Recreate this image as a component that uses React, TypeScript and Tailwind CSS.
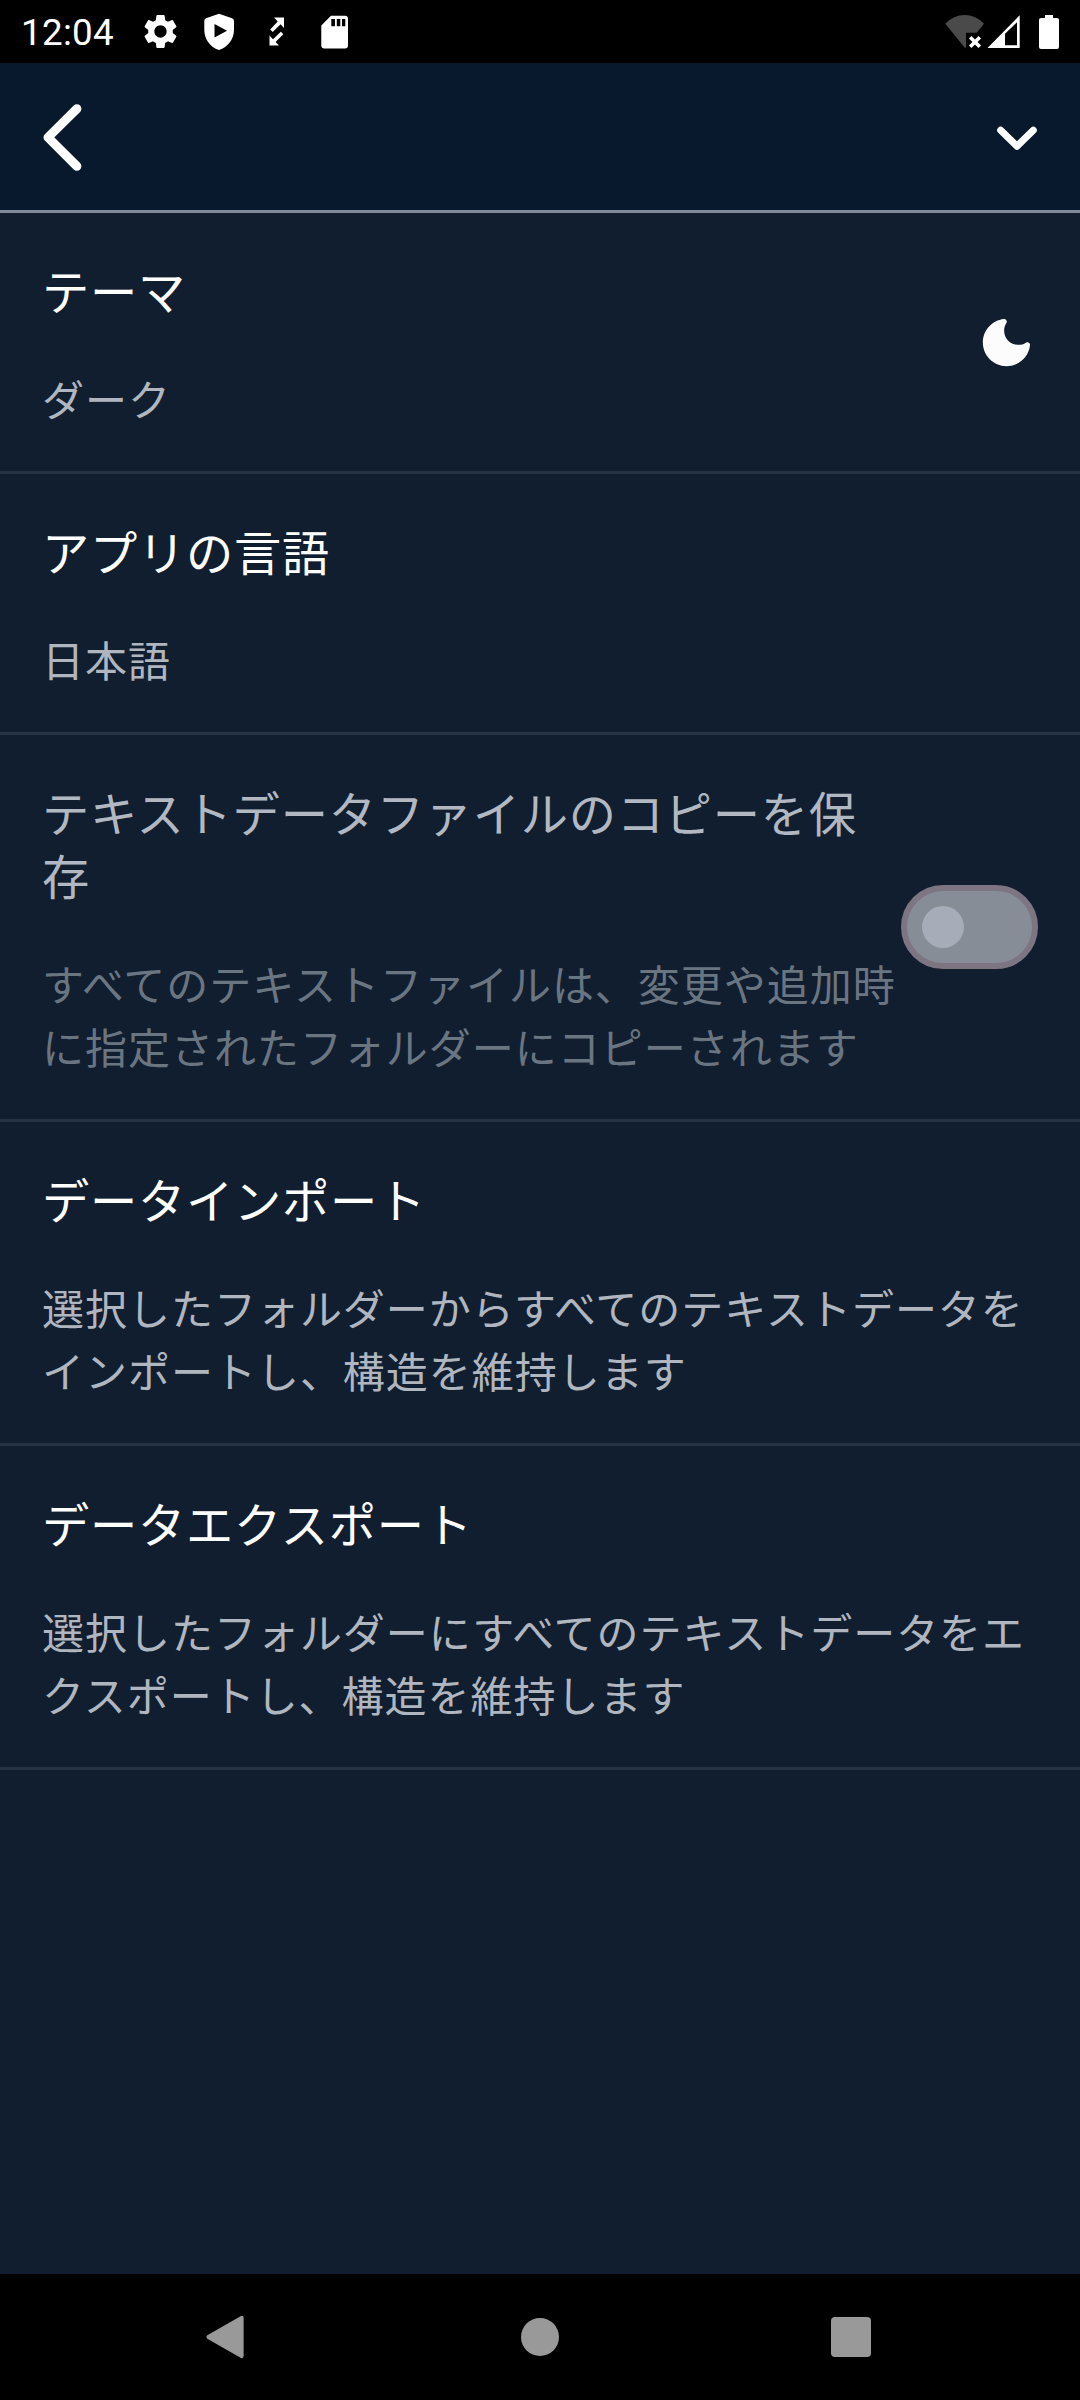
import type { ReactNode } from 'react';
import { MdSettings } from 'react-icons/md';

type SettingRowProps = {
    title: string;
    subtitle: string;
    disabled?: boolean;
    action?: ReactNode;
};

const StatusBar = () => (
    <div className="flex h-[63px] shrink-0 items-center justify-between bg-black pl-[21px] pr-[21px] text-white">
        <div className="flex items-center">
            <span className="w-[119px] pt-[3px] font-[Roboto,sans-serif] text-[36.75px] leading-none tracking-[0.3px]">
                12:04
            </span>
            <MdSettings className="h-[41px] w-[41px]" />
            <svg className="ml-[23px] h-[38px] w-[30px]" viewBox="0 0 30 38" fill="currentColor">
                <path
                    fillRule="evenodd"
                    d="M15 0.7L28 5.3Q30 6 30 8V17C30 26 24 34 15 37C6 34 0.3 26 0.3 17V8Q0.3 6 2 5.3ZM10.5 11V24.5L23 17.7Z"
                />
            </svg>
            <svg className="ml-[35px] h-[30px] w-[16px]" viewBox="0 0 16 30" fill="currentColor">
                <path d="M5 0.5H15V11L11.6 7.3L3.7 15L1.2 12.4L8.7 4.5Z" />
                <path d="M0.5 18.5L4 22.3L11.8 14.8L14.3 17.2L6.6 25L10 28.5H0.5Z" />
            </svg>
            <svg className="ml-[36px] h-[34px] w-[28px]" viewBox="0 0 28 34" fill="currentColor">
                <path
                    fillRule="evenodd"
                    d="M10 0.7H24Q27 0.7 27 3.7V30.5Q27 33.5 24 33.5H3.3Q0.3 33.5 0.3 30.5V10.5ZM10.3 4V11.3H14V4ZM15.8 4V11.3H19.3V4ZM21 4V11.3H24.3V4Z"
                />
            </svg>
        </div>
        <div className="flex items-center">
            <svg className="h-[36px] w-[40px]" viewBox="0 0 40 36" fill="none">
                <path d="M20 34L0.3 9.8Q8.5 1 19.7 1Q31 1 39 9.8L31.7 18.7H21V33Z" fill="#4a4a4a" />
                <path d="M25.2 23.2L34.8 32.8M34.8 23.2L25.2 32.8" stroke="currentColor" strokeWidth="3.6" />
            </svg>
            <svg className="ml-[2px] h-[36px] w-[34px]" viewBox="0 0 34 36" fill="currentColor">
                <path fillRule="evenodd" d="M0.5 34H32.7V1.2ZM18 19.8V31.2H30V8.3Z" />
            </svg>
            <svg className="ml-[18px] h-[36px] w-[20px]" viewBox="0 0 20 36" fill="currentColor">
                <path d="M6 1H14V4H18Q20 4 20 6V33Q20 35 18 35H2Q0 35 0 33V6Q0 4 2 4H6Z" />
            </svg>
        </div>
    </div>
);

const Header = () => (
    <header className="flex h-[150px] shrink-0 items-center justify-between border-b-3 border-[#7f8b9b] bg-[#08182d] px-[42px] text-white">
        <button aria-label="戻る">
            <svg className="h-[68px] w-[40px]" viewBox="0 0 40 68" fill="none" stroke="currentColor">
                <path d="M34.9 5.7L6 34.4L34.9 63.3" strokeWidth="9" strokeLinecap="round" strokeLinejoin="round" />
            </svg>
        </button>
        <button aria-label="開く">
            <svg className="h-[42px] w-[42px]" viewBox="0 0 42 42" fill="none" stroke="currentColor">
                <path d="M4.7 14.2L21 30.2L37.3 14.2" strokeWidth="7" strokeLinecap="round" strokeLinejoin="round" />
            </svg>
        </button>
    </header>
);

const MoonIcon = () => (
    <svg className="h-[63px] w-[63px] text-[#fcfcfc]" viewBox="0 0 24 24" fill="currentColor">
        <path d="M11.01 3.05C6.51 3.54 3 7.36 3 12c0 4.97 4.03 9 9 9 4.63 0 8.45-3.5 8.95-8 .09-.79-.78-1.42-1.54-.95-.84.54-1.84.85-2.91.85-2.98 0-5.4-2.42-5.4-5.4 0-1.06.31-2.06.84-2.89.45-.67-.04-1.63-.93-1.56z" />
    </svg>
);

const Toggle = () => (
    <div
        role="switch"
        aria-checked="false"
        aria-disabled="true"
        className="flex h-[84px] w-[137px] items-center rounded-full border-6 border-[#7d7581] bg-[#868d97] pl-[15px]"
    >
        <div className="size-[42px] rounded-full bg-[#a7adb8]" />
    </div>
);

const SettingRow = ({ title, subtitle, disabled = false, action }: SettingRowProps) => (
    <li className="flex items-center border-b-3 border-[#263344] px-[42px]">
        <div className="flex min-w-0 flex-1 flex-col gap-[45px] pb-[42px] pt-[45px] leading-[63px]">
            <h2 className={`text-[47.25px] tracking-[0.76px] ${disabled ? 'text-[#b2b8c1]' : 'text-white'}`}>
                {title}
            </h2>
            <p className={`-mr-1 text-[42px] tracking-[0.98px] ${disabled ? 'text-[#6a7582]' : 'text-[#b0b6bf]'}`}>
                {subtitle}
            </p>
        </div>
        {action && <div className="shrink-0">{action}</div>}
    </li>
);

const NavBar = () => (
    <nav className="flex h-[126px] shrink-0 items-center justify-between bg-black pl-[206px] pr-[209px] text-[#999999]">
        <svg className="h-[44px] w-[38px]" viewBox="0 0 38 44" fill="currentColor">
            <path d="M1.3 20.3L34.6 1.2Q37.6 0 37.6 3V41Q37.6 44 34.6 42.8L1.3 23.7Q-0.5 22 1.3 20.3Z" />
        </svg>
        <div className="ml-[4px] size-[38px] rounded-full bg-[#999999]" />
        <div className="size-[40px] rounded-[4px] bg-[#999999]" />
    </nav>
);

export default function App() {
    return (
        <div
            lang="ja"
            className="flex h-[2400px] w-[1080px] flex-col overflow-hidden bg-[#111e2f] font-['Noto_Sans_CJK_JP',sans-serif]"
        >
            <StatusBar />
            <Header />
            <ul className="flex-1">
                <SettingRow title="テーマ" subtitle="ダーク" action={<MoonIcon />} />
                <SettingRow title="アプリの言語" subtitle="日本語" />
                <SettingRow
                    title="テキストデータファイルのコピーを保存"
                    subtitle="すべてのテキストファイルは、変更や追加時に指定されたフォルダーにコピーされます"
                    disabled
                    action={<Toggle />}
                />
                <SettingRow
                    title="データインポート"
                    subtitle="選択したフォルダーからすべてのテキストデータをインポートし、構造を維持します"
                />
                <SettingRow
                    title="データエクスポート"
                    subtitle="選択したフォルダーにすべてのテキストデータをエクスポートし、構造を維持します"
                />
            </ul>
            <NavBar />
        </div>
    );
}
